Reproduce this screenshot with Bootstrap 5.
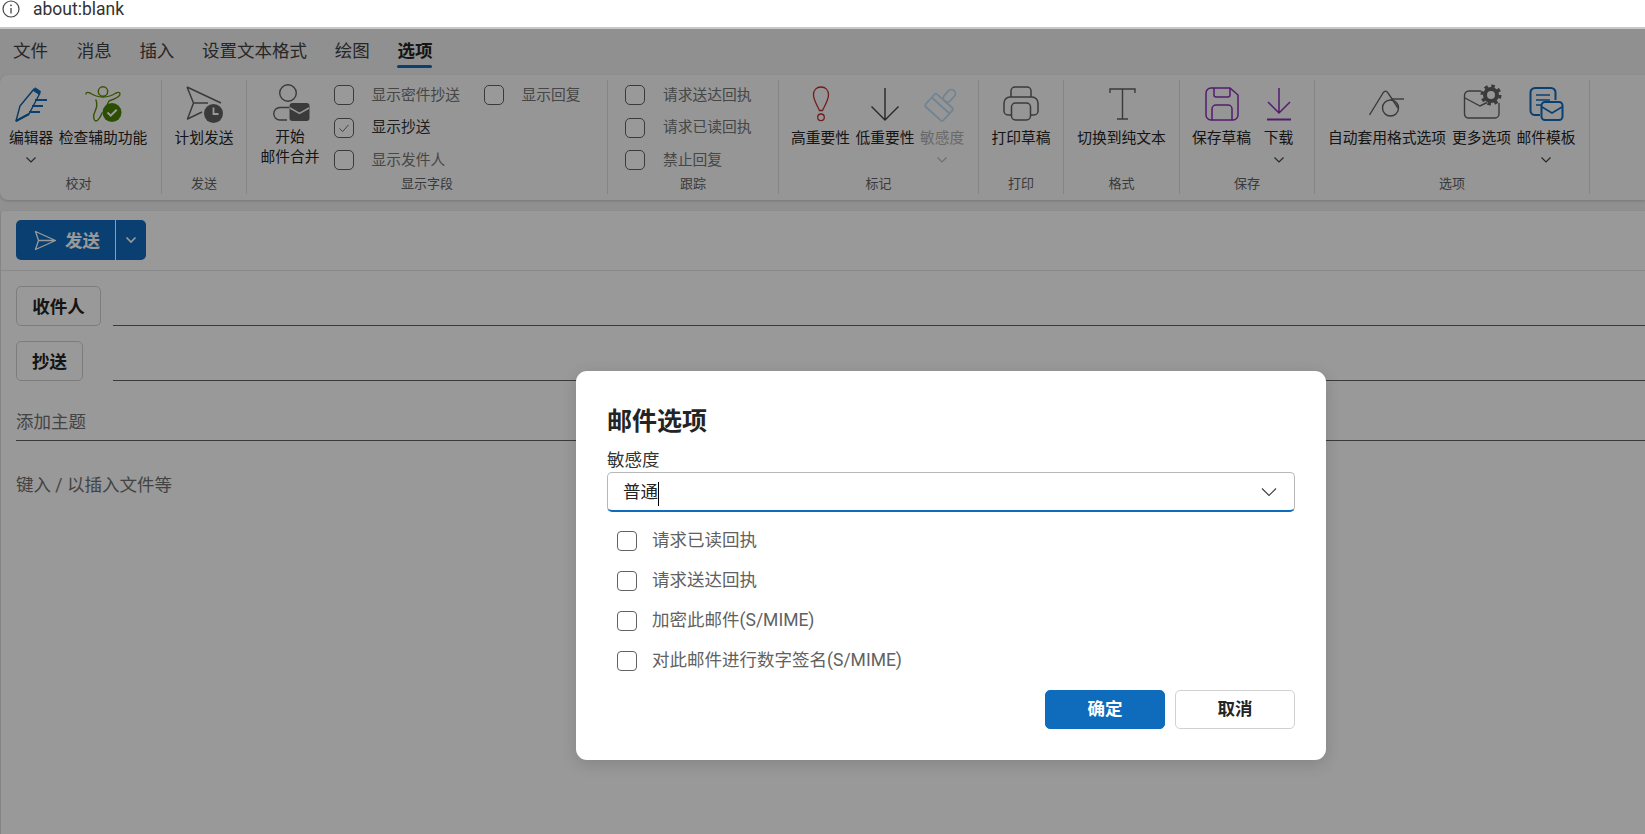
<!DOCTYPE html>
<html lang="zh-CN">
<head>
<meta charset="utf-8">
<title>邮件选项</title>
<link href="https://cdn.jsdelivr.net/npm/bootstrap@5.3.0/dist/css/bootstrap.min.css" rel="stylesheet">
<style>
html,body{height:100%;}
body{margin:0;overflow:hidden;background:#fff;color:#242424;font-family:Roboto,"Noto Sans CJK SC",sans-serif;font-size:17.5px;}
.addr{height:29px;background:#fff;position:relative;}
.addr-in{height:27px;border-bottom:2px solid #c8c8c8;box-sizing:content-box;padding-left:33px;font-size:17.5px;line-height:19px;color:#333;display:flex;}
.addr-ico{position:absolute;left:2px;top:0;}
.stage{position:relative;height:805px;background:#f0f0f0;overflow:hidden;}
.tabs{height:46px;padding:10px 0 0 13px;gap:27.7px;}
.tabitem{position:relative;line-height:24px;font-size:17.5px;color:#424242;white-space:nowrap;}
.tabitem.first{margin-right:1px;}
.tabitem.on{font-weight:700;color:#242424;}
.tabitem.on::after{content:"";position:absolute;left:0;right:0;top:26px;height:3px;border-radius:2px;background:#0f6cbd;}
.ribbon{height:125px;background:#fafafa;border-radius:8px 0 0 8px;padding-top:5px;box-shadow:0 1px 3px rgba(0,0,0,.18);}
.grp{height:114px;border-right:1px solid #dcdcdc;position:relative;flex:none;display:flex;flex-direction:column;}
.g1{width:162px;}.g2{width:85px;}.g3{width:361px;}.g4{width:171px;}.g5{width:200px;}.g6{width:85px;}.g7{width:116px;}.g8{width:135px;}.g9{width:275px;}
.gbody{flex:1;display:flex;align-items:flex-start;min-height:0;}
.gcap{height:18px;line-height:18px;margin-bottom:1px;font-size:13px;text-align:center;color:#616161;}
.g1 .gcap{padding-right:4px;}
.rbtn{flex:none;display:flex;flex-direction:column;align-items:center;white-space:nowrap;font-size:14.75px;line-height:20px;color:#242424;padding-top:4px;}
.rbtn svg.ic{width:40px;height:40px;display:block;margin-bottom:4px;}
.rbtn .chev{margin-top:8px;}
.rbtn.off{color:#b0b0b0;}
.rbtn.two svg.ic{margin-bottom:3px;}
.w48{width:48px;margin-left:7px;}.w96{width:96px;}.wfull{width:100%;}
.w60{width:60px;margin-left:13px;}
.w65{width:65px;}.w64b{width:64px;}.w50{width:50px;}.mg10{margin-left:9px;}
.w68{width:67px;margin-left:8px;}.w47{width:47px;}
.w124{width:124px;margin-left:10px;}.w64{width:64px;}.w65c{width:65px;}
.chkcol{display:flex;flex-direction:column;gap:12.5px;padding-top:5px;}
.chkrow{display:flex;align-items:center;height:20px;font-size:14.75px;white-space:nowrap;color:#757575;}
.chkrow.sel{color:#333;}
.chkrow .form-check-input,.dlg-chk .form-check-input{margin:0;flex:none;width:20px;height:20px;border:1px solid #616161;border-radius:5px;background-color:#fff;box-shadow:none;}
.chkrow .form-check-input{margin-right:18px;}
.chkrow .form-check-input:checked{background-color:#fff;border-color:#616161;background-image:url("data:image/svg+xml,%3csvg xmlns='http://www.w3.org/2000/svg' viewBox='0 0 20 20'%3e%3cpath fill='none' stroke='%23616161' d='M5 10.5l3.5 3.5L15 6.5'/%3e%3c/svg%3e");}
.c1{margin-left:13.5px;width:150px;}
.c4{margin-left:17px;}
.panel{margin-top:10px;height:624px;background:#fff;border-left:1px solid #dedede;border-top:1px solid #ececec;border-radius:4px 0 0 0;}
.tbar{height:60px;padding:9px 0 0 15px;border-bottom:1px solid #e4e4e4;}
.sendb{display:flex;width:130px;height:40px;border-radius:5px;background:#0f6cbd;color:#fff;font-weight:700;overflow:hidden;}
.sendb .a{width:100px;display:flex;align-items:center;border-right:1px solid #fff;padding-left:18px;gap:8px;}
.sendb .a span{padding-top:2px;}
.sendb .b{flex:1;display:flex;align-items:center;justify-content:center;}
.frow{display:flex;padding-left:15px;align-items:flex-end;margin-top:15px;}
.fbtn{height:40px;border:1px solid #d1d1d1;border-radius:5px;background:#fff;font-weight:700;font-size:17.5px;line-height:40px;padding:0;text-align:center;color:#242424;}
.fb1{width:85px;margin-right:12px;}.fb2{width:67px;margin-right:30px;}
.fline{flex:1;border-bottom:1px solid #616161;height:1px;}
.subj{margin:23px 0 0 15px;height:37px;border-bottom:1px solid #616161;line-height:37px;color:#707070;font-size:17.5px;}
.bodyt{margin:29px 0 0 15px;line-height:30px;color:#707070;font-size:17.5px;}
.shade{position:absolute;inset:0;background:rgba(0,0,0,.4);}
.dlg{position:absolute;left:576px;top:342px;width:750px;height:389px;background:#fff;border-radius:11px;box-shadow:0 4px 16px rgba(0,0,0,.14);padding:33px 31px 0 31px;}
.dlg-title{font-size:25px;font-weight:700;line-height:36px;margin:0;color:#242424;}
.dlg-lab{display:block;font-size:17.5px;line-height:24px;margin:8px 0 0;color:#333;}
.combo{height:40px;border:1px solid #b8b8b8;border-bottom:2px solid #0f6cbd;border-radius:5px;display:flex;align-items:center;padding-left:15px;padding-right:17px;justify-content:space-between;color:#242424;}
.combo span{padding-top:2px;}
.caret{display:inline-block;width:1px;height:24px;background:#000;vertical-align:middle;}
.dlg-chk{display:flex;flex-direction:column;gap:20px;margin-top:18.5px;padding-left:10px;}
.dlg-chk .chkrow{font-size:17.5px;color:#616161;}
.dlg-chk .form-check-input{margin-right:15px;border-radius:4px;}
.dlg-act{display:flex;justify-content:flex-end;gap:10px;margin-top:19px;}
.dbtn{width:120px;height:39px;border-radius:5px;font-weight:700;font-size:17.5px;padding:0;line-height:37px;}
.dbtn.pri{background:#0f6cbd;border:1px solid #0f6cbd;color:#fff;}
.dbtn.sec{background:#fff;border:1px solid #d1d1d1;color:#242424;}
</style>
</head>
<body>
<div class="addr">
  <svg class="addr-ico" width="18" height="18" viewBox="0 0 18 18"><circle cx="9" cy="9" r="8" fill="none" stroke="#444" stroke-width="1.200"/><path d="M9 8v5.500" stroke="#444" stroke-width="1.300"/><circle cx="9" cy="5.300" r=".9" fill="#444"/></svg>
  <div class="addr-in"><span>about:blank</span></div>
</div>
<div class="stage">
  <nav class="tabs d-flex">
    <span class="tabitem first">文件</span><span class="tabitem">消息</span><span class="tabitem">插入</span><span class="tabitem">设置文本格式</span><span class="tabitem">绘图</span><span class="tabitem on">选项</span>
  </nav>
  <div class="ribbon d-flex">
    <div class="grp g1">
      <div class="gbody">
        <div class="rbtn w48">
          <svg class="ic" viewBox="0 0 40 40" fill="none"><path d="M5 37L9 22 23 5l6 4-11 21z" stroke="#115ea3" stroke-width="1.400" stroke-linejoin="round"/><path d="M5 37l13-7" stroke="#115ea3" stroke-width="2"/><path d="M23 5l6 4" stroke="#0f6cbd" stroke-width="4"/><path d="M24 16h12M21 22h11M18 28h11" stroke="#0f6cbd" stroke-width="2"/></svg>
          <span>编辑器</span>
          <svg class="chev" width="12" height="8" viewBox="0 0 12 8"><path d="M1.500 1.500L6 6l4.500-4.500" fill="none" stroke="#424242" stroke-width="1.200"/></svg>
        </div>
        <div class="rbtn w96">
          <svg class="ic" viewBox="0 0 40 40" fill="none"><circle cx="20" cy="7.500" r="4.700" stroke="#5c8a00" stroke-width="1.400"/><path d="M3 10c0-2 2-2 4-1 3 2 6 4 13 4s10-2 13-4c2-1 4-1 4 1 0 3-8 6-11 7l-4 8M13 16c2 6 0 9-2 14-1 3 0 7 2 7s5-5 6-8" stroke="#5c8a00" stroke-width="1.400" stroke-linecap="round"/><circle cx="29" cy="28.500" r="9.500" fill="#498205"/><path d="M24.500 28.500l3.200 3.200 6-6" stroke="#fff" stroke-width="2"/></svg>
          <span>检查辅助功能</span>
        </div>
      </div>
      <div class="gcap">校对</div>
    </div>
    <div class="grp g2">
      <div class="gbody">
        <div class="rbtn wfull">
          <svg class="ic" viewBox="0 0 40 40" fill="none"><path d="M3 3l34 16M3 3l6.500 16L3.500 35 18 28M9.500 19H24" stroke="#616161" stroke-width="1.500" stroke-linejoin="round"/><circle cx="29.500" cy="29.500" r="9.500" fill="#616161"/><path d="M29.500 23.500v6.500h5" stroke="#fff" stroke-width="1.800"/></svg>
          <span>计划发送</span>
        </div>
      </div>
      <div class="gcap">发送</div>
    </div>
    <div class="grp g3">
      <div class="gbody">
        <div class="rbtn w60 two">
          <svg class="ic" viewBox="0 0 40 40" fill="none"><circle cx="18" cy="9" r="8.300" stroke="#616161" stroke-width="1.400"/><path d="M17 36H10a6 6 0 0 1 0-12.500h9" stroke="#616161" stroke-width="1.400"/><rect x="19.500" y="19" width="20" height="18" rx="3" fill="#616161"/><path d="M20 24l9.500 5.500L39 24" stroke="#fafafa" stroke-width="1.500"/></svg>
          <span>开始</span><span>邮件合并</span>
        </div>
        <div class="chkcol c1">
          <label class="chkrow"><input class="form-check-input" type="checkbox">显示密件抄送</label>
          <label class="chkrow sel"><input class="form-check-input" type="checkbox" checked>显示抄送</label>
          <label class="chkrow"><input class="form-check-input" type="checkbox">显示发件人</label>
        </div>
        <div class="chkcol">
          <label class="chkrow"><input class="form-check-input" type="checkbox">显示回复</label>
        </div>
      </div>
      <div class="gcap">显示字段</div>
    </div>
    <div class="grp g4">
      <div class="gbody">
        <div class="chkcol c4">
          <label class="chkrow"><input class="form-check-input" type="checkbox">请求送达回执</label>
          <label class="chkrow"><input class="form-check-input" type="checkbox">请求已读回执</label>
          <label class="chkrow"><input class="form-check-input" type="checkbox">禁止回复</label>
        </div>
      </div>
      <div class="gcap">跟踪</div>
    </div>
    <div class="grp g5">
      <div class="gbody">
        <div class="rbtn w65 mg10">
          <svg class="ic" viewBox="0 0 40 40" fill="none"><path d="M20 3c-4.500 0-7.500 3-7.500 8 0 5 4.500 12 6 15.500h3c1.500-3.500 6-10.500 6-15.500 0-5-3-8-7.500-8z" stroke="#bc2f32" stroke-width="1.300"/><circle cx="20" cy="33.300" r="3.300" stroke="#bc2f32" stroke-width="1.300"/></svg>
          <span>高重要性</span>
        </div>
        <div class="rbtn w64b">
          <svg class="ic" viewBox="0 0 40 40" fill="none"><path d="M20 4v32M6.500 22.500L20 36l13.500-13.500" stroke="#424242" stroke-width="1.400"/></svg>
          <span>低重要性</span>
        </div>
        <div class="rbtn w50 off">
          <svg class="ic" viewBox="0 0 40 40" fill="none" stroke="#bcdcf5" stroke-width="1.800"><g transform="rotate(42 20 20)"><rect x="8" y="16" width="24" height="17" rx="2"/><path d="M8 22h24"/><rect x="16" y="2" width="8" height="14" rx="4"/></g></svg>
          <span>敏感度</span>
          <svg class="chev" width="12" height="8" viewBox="0 0 12 8"><path d="M1.500 1.500L6 6l4.500-4.500" fill="none" stroke="#bdbdbd" stroke-width="1.200"/></svg>
        </div>
      </div>
      <div class="gcap">标记</div>
    </div>
    <div class="grp g6">
      <div class="gbody">
        <div class="rbtn wfull">
          <svg class="ic" viewBox="0 0 40 40" fill="none" stroke="#616161" stroke-width="1.500"><path d="M10 13V7a4 4 0 0 1 4-4h12a4 4 0 0 1 4 4v6"/><path d="M10 31H7a4 4 0 0 1-4-4v-8a6 6 0 0 1 6-6h22a6 6 0 0 1 6 6v8a4 4 0 0 1-4 4h-3"/><rect x="10.500" y="19" width="19" height="17" rx="4"/></svg>
          <span>打印草稿</span>
        </div>
      </div>
      <div class="gcap">打印</div>
    </div>
    <div class="grp g7">
      <div class="gbody">
        <div class="rbtn wfull">
          <svg class="ic" viewBox="0 0 40 40" fill="none" stroke="#616161" stroke-width="1.400"><path d="M8 9V5h25v4M20.500 5v30M15 35h11"/></svg>
          <span>切换到纯文本</span>
        </div>
      </div>
      <div class="gcap">格式</div>
    </div>
    <div class="grp g8">
      <div class="gbody">
        <div class="rbtn w68">
          <svg class="ic" viewBox="0 0 40 40" fill="none" stroke="#8a2fb5" stroke-width="1.500"><path d="M9 4h19l8 7v20a5 5 0 0 1-5 5H9a5 5 0 0 1-5-5V9a5 5 0 0 1 5-5z"/><path d="M12 4v7a2 2 0 0 0 2 2h12a2 2 0 0 0 2-2V4"/><path d="M10 36V25a4 4 0 0 1 4-4h12a4 4 0 0 1 4 4v11"/></svg>
          <span>保存草稿</span>
        </div>
        <div class="rbtn w47">
          <svg class="ic" viewBox="0 0 40 40" fill="none" stroke="#8a2fb5" stroke-width="1.500"><path d="M20 4v25M9 18l11 11 11-11"/><path d="M8 35.500h24" stroke-width="2"/></svg>
          <span>下载</span>
          <svg class="chev" width="12" height="8" viewBox="0 0 12 8"><path d="M1.500 1.500L6 6l4.500-4.500" fill="none" stroke="#424242" stroke-width="1.200"/></svg>
        </div>
      </div>
      <div class="gcap">保存</div>
    </div>
    <div class="grp g9">
      <div class="gbody">
        <div class="rbtn w124">
          <svg class="ic" viewBox="0 0 40 40" fill="none" stroke="#616161" stroke-width="1.400"><path d="M2.500 31L16 9c1.500-2.500 3.500-2.500 5 0l10 15"/><circle cx="23.500" cy="24" r="8"/><path d="M24 15h13"/></svg>
          <span>自动套用格式选项</span>
        </div>
        <div class="rbtn w65c">
          <svg class="ic" viewBox="0 0 40 40" fill="none"><path d="M19 7H7a4.500 4.500 0 0 0-4.500 4.500V30A4 4 0 0 0 7 34h26a4 4 0 0 0 4-4V19" stroke="#616161" stroke-width="1.400"/><path d="M3 14l15 8 7-3.500" stroke="#616161" stroke-width="1.400"/><circle cx="29" cy="11" r="6" stroke="#616161" stroke-width="4"/><circle cx="29" cy="11" r="9" stroke="#616161" stroke-width="3" stroke-dasharray="3.500 3.570"/></svg>
          <span>更多选项</span>
        </div>
        <div class="rbtn w64">
          <svg class="ic" viewBox="0 0 40 40" fill="none" stroke="#0f6cbd"><path d="M14 31H9a4.500 4.500 0 0 1-4.500-4.500V8.500A4.500 4.500 0 0 1 9 4h16a4.500 4.500 0 0 1 4.500 4.500V16" stroke-width="2"/><path d="M10 11h14M10 16h14M10 21h5" stroke-width="1.600"/><rect x="15.500" y="18" width="21" height="18" rx="3.500" fill="#fafafa" stroke-width="2"/><path d="M16 23l10 6 10-6" stroke-width="1.600"/></svg>
          <span>邮件模板</span>
          <svg class="chev" width="12" height="8" viewBox="0 0 12 8"><path d="M1.500 1.500L6 6l4.500-4.500" fill="none" stroke="#424242" stroke-width="1.200"/></svg>
        </div>
      </div>
      <div class="gcap">选项</div>
    </div>
  </div>
  <main class="panel">
    <div class="tbar">
      <div class="sendb">
        <div class="a"><svg width="23" height="21" viewBox="0 0 23 21" fill="none"><path d="M1.500 1.500L21.500 10.500 1.500 19.500 4.500 10.500zM4.500 10.500H21" stroke="#fff" stroke-width="1.300" stroke-linejoin="round"/></svg><span>发送</span></div>
        <div class="b"><svg width="12" height="8" viewBox="0 0 12 8"><path d="M1.500 1.500L6 6l4.500-4.500" fill="none" stroke="#fff" stroke-width="1.700"/></svg></div>
      </div>
    </div>
    <div class="frow"><button class="fbtn fb1">收件人</button><div class="fline"></div></div>
    <div class="frow"><button class="fbtn fb2">抄送</button><div class="fline"></div></div>
    <div class="subj">添加主题</div>
    <div class="bodyt">键入 / 以插入文件等</div>
  </main>
  <div class="shade"></div>
  <div class="dlg" role="dialog">
    <h2 class="dlg-title">邮件选项</h2>
    <label class="dlg-lab">敏感度</label>
    <div class="combo"><span>普通<i class="caret"></i></span><svg width="16" height="10" viewBox="0 0 16 10"><path d="M1 1.500L8 8.500l7-7" fill="none" stroke="#424242" stroke-width="1.200"/></svg></div>
    <div class="dlg-chk">
      <label class="chkrow"><input class="form-check-input" type="checkbox">请求已读回执</label>
      <label class="chkrow"><input class="form-check-input" type="checkbox">请求送达回执</label>
      <label class="chkrow"><input class="form-check-input" type="checkbox">加密此邮件(S/MIME)</label>
      <label class="chkrow"><input class="form-check-input" type="checkbox">对此邮件进行数字签名(S/MIME)</label>
    </div>
    <div class="dlg-act"><button class="dbtn pri">确定</button><button class="dbtn sec">取消</button></div>
  </div>
</div>
<script src="https://cdn.jsdelivr.net/npm/bootstrap@5.3.0/dist/js/bootstrap.bundle.min.js"></script>
</body>
</html>
